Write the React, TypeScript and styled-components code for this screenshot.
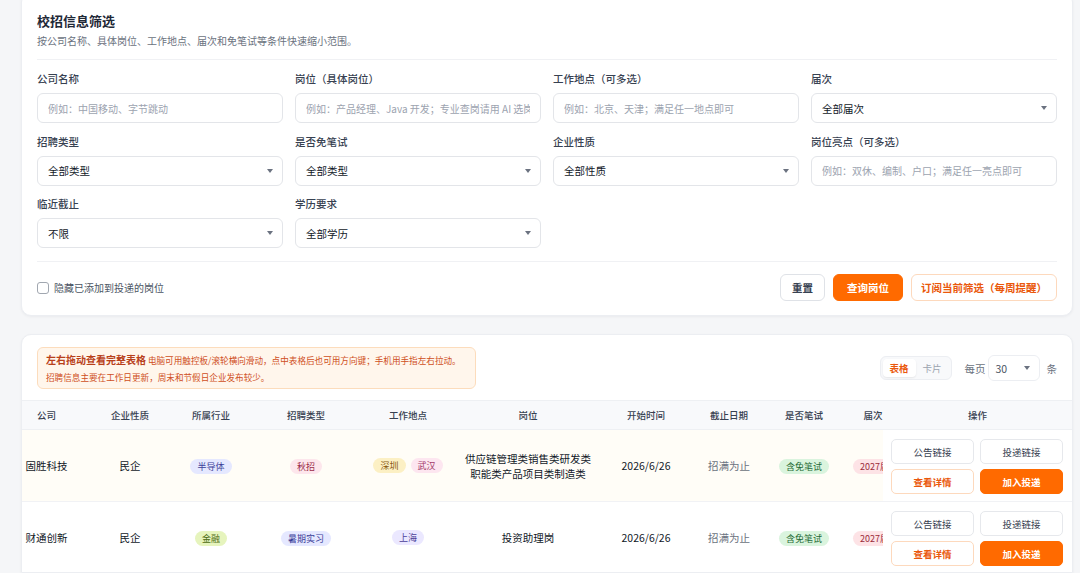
import { useLayoutEffect, useRef } from "react";
import styled, { createGlobalStyle } from "styled-components";

const GlobalStyle = createGlobalStyle`
  * { box-sizing: border-box; }
  body {
    margin: 0;
    background: #f5f6f8;
    font-family: "Noto Sans CJK SC", "Noto Sans", sans-serif;
    color: #111827;
    overflow: hidden;
  }
`;

const ORANGE = "#ff6a00";

type TagTone = "indigo" | "rose" | "amber" | "pink" | "lime" | "violet" | "green" | "red";

const tones: Record<TagTone, [string, string]> = {
  indigo: ["#e5e8ff", "#3b3f99"],
  rose: ["#fde6ec", "#9b2c4a"],
  amber: ["#fcf0c4", "#8a5a12"],
  pink: ["#fde6f0", "#a33a6b"],
  lime: ["#e6f4bd", "#4d6b12"],
  violet: ["#ebe8ff", "#4c3f99"],
  green: ["#daf4de", "#1f6b35"],
  red: ["#fde3e6", "#9b2c3a"],
};

const filters: { label: string; placeholder?: string; value?: string }[] = [
  { label: "公司名称", placeholder: "例如：中国移动、字节跳动" },
  { label: "岗位（具体岗位）", placeholder: "例如：产品经理、Java 开发；专业查岗请用 AI 选岗" },
  { label: "工作地点（可多选）", placeholder: "例如：北京、天津；满足任一地点即可" },
  { label: "届次", value: "全部届次" },
  { label: "招聘类型", value: "全部类型" },
  { label: "是否免笔试", value: "全部类型" },
  { label: "企业性质", value: "全部性质" },
  { label: "岗位亮点（可多选）", placeholder: "例如：双休、编制、户口；满足任一亮点即可" },
  { label: "临近截止", value: "不限" },
  { label: "学历要求", value: "全部学历" },
];

const columns = [
  { title: "公司", width: 81 },
  { title: "企业性质", width: 86 },
  { title: "所属行业", width: 76 },
  { title: "招聘类型", width: 114 },
  { title: "工作地点", width: 90 },
  { title: "岗位", width: 150 },
  { title: "开始时间", width: 86 },
  { title: "截止日期", width: 80 },
  { title: "是否笔试", width: 70 },
  { title: "届次", width: 68 },
  { title: "操作", width: 189 },
];

type Row = {
  company: string;
  nature: string;
  industry: [string, TagTone];
  type: [string, TagTone];
  cities: [string, TagTone][];
  position: string;
  start: string;
  deadline: string;
  exam: string;
  grade: string;
  highlight?: boolean;
};

const rows: Row[] = [
  {
    company: "固胜科技",
    nature: "民企",
    industry: ["半导体", "indigo"],
    type: ["秋招", "rose"],
    cities: [
      ["深圳", "amber"],
      ["武汉", "pink"],
    ],
    position: "供应链管理类销售类研发类职能类产品项目类制造类",
    start: "2026/6/26",
    deadline: "招满为止",
    exam: "含免笔试",
    grade: "2027届",
    highlight: true,
  },
  {
    company: "财通创新",
    nature: "民企",
    industry: ["金融", "lime"],
    type: ["暑期实习", "indigo"],
    cities: [["上海", "violet"]],
    position: "投资助理岗",
    start: "2026/6/26",
    deadline: "招满为止",
    exam: "含免笔试",
    grade: "2027届",
  },
];

export default function App() {
  const scrollRef = useRef<HTMLDivElement>(null);

  useLayoutEffect(() => {
    if (scrollRef.current) scrollRef.current.scrollLeft = 16;
  }, []);

  return (
    <Page>
      <GlobalStyle />
      <FilterCard>
        <Title>校招信息筛选</Title>
        <Subtitle>按公司名称、具体岗位、工作地点、届次和免笔试等条件快速缩小范围。</Subtitle>
        <Divider />
        <FilterGrid>
          {filters.map((f) => (
            <Field key={f.label}>
              <Label>{f.label}</Label>
              {f.placeholder ? (
                <TextInput placeholder={f.placeholder} />
              ) : (
                <SelectBox>
                  <span>{f.value}</span>
                  <Caret />
                </SelectBox>
              )}
            </Field>
          ))}
        </FilterGrid>
        <Divider $top={13} />
        <ActionRow>
          <CheckLabel>
            <CheckBox />
            隐藏已添加到投递的岗位
          </CheckLabel>
          <Actions>
            <Button $variant="ghost">重置</Button>
            <Button $variant="primary">查询岗位</Button>
            <Button $variant="outline">订阅当前筛选（每周提醒）</Button>
          </Actions>
        </ActionRow>
      </FilterCard>

      <TableCard>
        <Toolbar>
          <Notice>
            <NoticeLine>
              <strong>左右拖动查看完整表格</strong> 电脑可用触控板/滚轮横向滑动，点中表格后也可用方向键；手机用手指左右拉动。
            </NoticeLine>
            <NoticeLine>招聘信息主要在工作日更新，周末和节假日企业发布较少。</NoticeLine>
          </Notice>
          <ViewControls>
            <Toggle>
              <ToggleItem $active>表格</ToggleItem>
              <ToggleItem>卡片</ToggleItem>
            </Toggle>
            <PerPage>每页</PerPage>
            <PageSize>
              <span>30</span>
              <Caret />
            </PageSize>
            <PerPage>条</PerPage>
          </ViewControls>
        </Toolbar>

        <ScrollArea ref={scrollRef}>
          <Table>
            <colgroup>
              {columns.map((c) => (
                <col key={c.title} style={{ width: c.width }} />
              ))}
            </colgroup>
            <thead>
              <tr>
                {columns.map((c, i) => (
                  <Th key={c.title} $sticky={i === columns.length - 1}>
                    {c.title}
                  </Th>
                ))}
              </tr>
            </thead>
            <tbody>
              {rows.map((r) => (
                <Tr key={r.company} $highlight={r.highlight}>
                  <Td>{r.company}</Td>
                  <Td>{r.nature}</Td>
                  <Td>
                    <Tag $tone={r.industry[1]}>{r.industry[0]}</Tag>
                  </Td>
                  <Td>
                    <Tag $tone={r.type[1]}>{r.type[0]}</Tag>
                  </Td>
                  <Td>
                    <TagList>
                      {r.cities.map(([c, t]) => (
                        <Tag key={c} $tone={t}>
                          {c}
                        </Tag>
                      ))}
                    </TagList>
                  </Td>
                  <Td $wrap>{r.position}</Td>
                  <Td>{r.start}</Td>
                  <Td $muted>{r.deadline}</Td>
                  <Td>
                    <Tag $tone="green">{r.exam}</Tag>
                  </Td>
                  <Td $clip>
                    <Tag $tone="red">{r.grade}</Tag>
                  </Td>
                  <OpsCell>
                    <OpsGrid>
                      <OpButton $variant="ghost">公告链接</OpButton>
                      <OpButton $variant="ghost">投递链接</OpButton>
                      <OpButton $variant="outline">查看详情</OpButton>
                      <OpButton $variant="primary">加入投递</OpButton>
                    </OpsGrid>
                  </OpsCell>
                </Tr>
              ))}
            </tbody>
          </Table>
        </ScrollArea>
      </TableCard>
    </Page>
  );
}

const Page = styled.div`
  display: flex;
  flex-direction: column;
  gap: 18px;
  padding: 0 7px 0 21px;
  height: 573px;
`;

const FilterCard = styled.section`
  margin-top: -8px;
  background: #fff;
  border: 1px solid #eceef2;
  border-radius: 10px;
  box-shadow: 0 1px 3px rgba(17, 24, 39, 0.05);
  padding: 18px 15px 14px;
`;

const Title = styled.h2`
  margin: 0;
  font-size: 13px;
  line-height: 20px;
  font-weight: 700;
  color: #1f2937;
`;

const Subtitle = styled.p`
  margin: 2px 0 0;
  font-size: 10px;
  line-height: 16px;
  color: #6b7280;
`;

const Divider = styled.div<{ $top?: number }>`
  height: 1px;
  background: #f0f1f4;
  margin: ${(p) => p.$top ?? 10}px 0 ${(p) => (p.$top ? 12 : 11)}px;
`;

const FilterGrid = styled.div`
  display: grid;
  grid-template-columns: repeat(4, 1fr);
  column-gap: 12px;
  row-gap: 10.5px;
`;

const Field = styled.label`
  display: flex;
  flex-direction: column;
  gap: 6px;
  min-width: 0;
`;

const Label = styled.span`
  font-size: 10.5px;
  line-height: 16px;
  font-weight: 500;
  color: #374151;
`;

const fieldBox = `
  height: 30px;
  border: 1px solid #e3e5e9;
  border-radius: 6px;
  background: #fff;
  padding: 0 10px;
  font-family: inherit;
  font-size: 10px;
`;

const TextInput = styled.input`
  ${fieldBox}
  width: 100%;
  color: #111827;
  outline: none;
  &::placeholder {
    color: #9ca3af;
  }
`;

const SelectBox = styled.div`
  ${fieldBox}
  display: flex;
  align-items: center;
  justify-content: space-between;
  color: #111827;
  font-size: 10.5px;
  padding-right: 9px;
`;

const Caret = styled.i`
  width: 0;
  height: 0;
  border-left: 3.5px solid transparent;
  border-right: 3.5px solid transparent;
  border-top: 4px solid #6b7280;
`;

const ActionRow = styled.div`
  display: flex;
  align-items: center;
  justify-content: space-between;
`;

const CheckLabel = styled.label`
  display: flex;
  align-items: center;
  gap: 5px;
  font-size: 10px;
  color: #4b5563;
`;

const CheckBox = styled.span`
  width: 12px;
  height: 12px;
  border: 1px solid #a1a7b0;
  border-radius: 3px;
  background: #fff;
`;

const Actions = styled.div`
  display: flex;
  gap: 8px;
`;

type Variant = "ghost" | "primary" | "outline";

const variantCss = (v: Variant) => {
  if (v === "primary") return `background: ${ORANGE}; border-color: ${ORANGE}; color: #fff;`;
  if (v === "outline") return `background: #fff; border-color: #fdd9bd; color: #ea580c;`;
  return `background: #fff; border-color: #dfe2e7; color: #374151;`;
};

const Button = styled.button<{ $variant: Variant }>`
  height: 27px;
  border: 1px solid;
  border-radius: 6px;
  font-family: inherit;
  font-size: 10.5px;
  font-weight: 600;
  padding: ${(p) => (p.$variant === "outline" ? "0 9px" : p.$variant === "primary" ? "0 13px" : "0 11px")};
  ${(p) => variantCss(p.$variant)}
`;

const TableCard = styled.section`
  flex: 1;
  background: #fff;
  border: 1px solid #eceef2;
  border-radius: 10px 10px 0 0;
  box-shadow: 0 1px 3px rgba(17, 24, 39, 0.05);
  padding-top: 12px;
  overflow: hidden;
`;

const Toolbar = styled.div`
  display: flex;
  align-items: center;
  justify-content: space-between;
  padding: 0 15px;
`;

const Notice = styled.div`
  width: 439px;
  background: #fff6ec;
  border: 1px solid #fcdcbc;
  border-radius: 6px;
  padding: 2.5px 8px;
  color: #cf4f1c;
`;

const NoticeLine = styled.div`
  font-size: 8.6px;
  line-height: 17px;
  white-space: nowrap;
  strong {
    font-size: 10px;
    color: #b8401a;
  }
`;

const ViewControls = styled.div`
  display: flex;
  align-items: center;
`;

const Toggle = styled.div`
  display: flex;
  padding: 2px;
  border: 1px solid #eceef2;
  border-radius: 6px;
  background: #f8f9fb;
  margin-right: 13px;
`;

const ToggleItem = styled.span<{ $active?: boolean }>`
  width: 33px;
  height: 18px;
  display: flex;
  align-items: center;
  justify-content: center;
  border-radius: 4px;
  font-size: 9.5px;
  font-weight: ${(p) => (p.$active ? 600 : 400)};
  color: ${(p) => (p.$active ? "#ea580c" : "#9ca3af")};
  background: ${(p) => (p.$active ? "#fff" : "transparent")};
  box-shadow: ${(p) => (p.$active ? "0 1px 2px rgba(0,0,0,0.08)" : "none")};
`;

const PerPage = styled.span`
  font-size: 10.5px;
  color: #6b7280;
`;

const PageSize = styled.div`
  width: 52px;
  height: 26px;
  margin: 0 7px 0 2px;
  border: 1px solid #eceef2;
  border-radius: 6px;
  display: flex;
  align-items: center;
  justify-content: space-between;
  padding: 0 9px 0 7px;
  font-size: 10.5px;
  color: #4b5563;
`;

const ScrollArea = styled.div`
  margin-top: 11px;
  overflow-x: auto;
  scrollbar-width: none;
  &::-webkit-scrollbar {
    display: none;
  }
`;

const Table = styled.table`
  width: 1090px;
  table-layout: fixed;
  border-collapse: separate;
  border-spacing: 0;
`;

const Th = styled.th<{ $sticky?: boolean }>`
  height: 30px;
  padding: 0 4px;
  background: #f8f9fb;
  border-top: 1px solid #eef0f3;
  border-bottom: 1px solid #eef0f3;
  font-size: 9.5px;
  font-weight: 500;
  color: #374151;
  text-align: center;
  ${(p) => (p.$sticky ? "position: sticky; right: 0;" : "")}
`;

const Tr = styled.tr<{ $highlight?: boolean }>`
  background: ${(p) => (p.$highlight ? "#fffdf7" : "#fff")};
`;

const Td = styled.td<{ $wrap?: boolean; $muted?: boolean; $clip?: boolean }>`
  padding: 0 8px;
  border-bottom: 1px solid #f1f2f5;
  text-align: center;
  vertical-align: middle;
  font-size: 10.5px;
  line-height: 15px;
  color: ${(p) => (p.$muted ? "#6b7280" : "#111827")};
  white-space: ${(p) => (p.$wrap ? "normal" : "nowrap")};
  ${(p) => (p.$clip ? "padding: 0 0 0 14px; text-align: left;" : "")}
`;

const OpsCell = styled.td`
  position: sticky;
  right: 0;
  background: #fff;
  padding: 9px 9px 7px 8px;
  border-bottom: 1px solid #f1f2f5;
`;

const OpsGrid = styled.div`
  display: grid;
  grid-template-columns: 83px 83px;
  gap: 5px 6px;
`;

const OpButton = styled.button<{ $variant: Variant }>`
  height: 25px;
  border: 1px solid;
  border-radius: 5px;
  font-family: inherit;
  font-size: 9.5px;
  font-weight: ${(p) => (p.$variant === "ghost" ? 400 : 600)};
  ${(p) => variantCss(p.$variant)}
  border-color: ${(p) => (p.$variant === "ghost" ? "#e6e8ec" : undefined)};
`;

const TagList = styled.div`
  display: flex;
  justify-content: center;
  gap: 5px;
`;

const Tag = styled.span<{ $tone: TagTone }>`
  display: inline-block;
  padding: 1px 7px;
  border-radius: 999px;
  font-size: 9px;
  line-height: 13px;
  white-space: nowrap;
  background: ${(p) => tones[p.$tone][0]};
  color: ${(p) => tones[p.$tone][1]};
`;
